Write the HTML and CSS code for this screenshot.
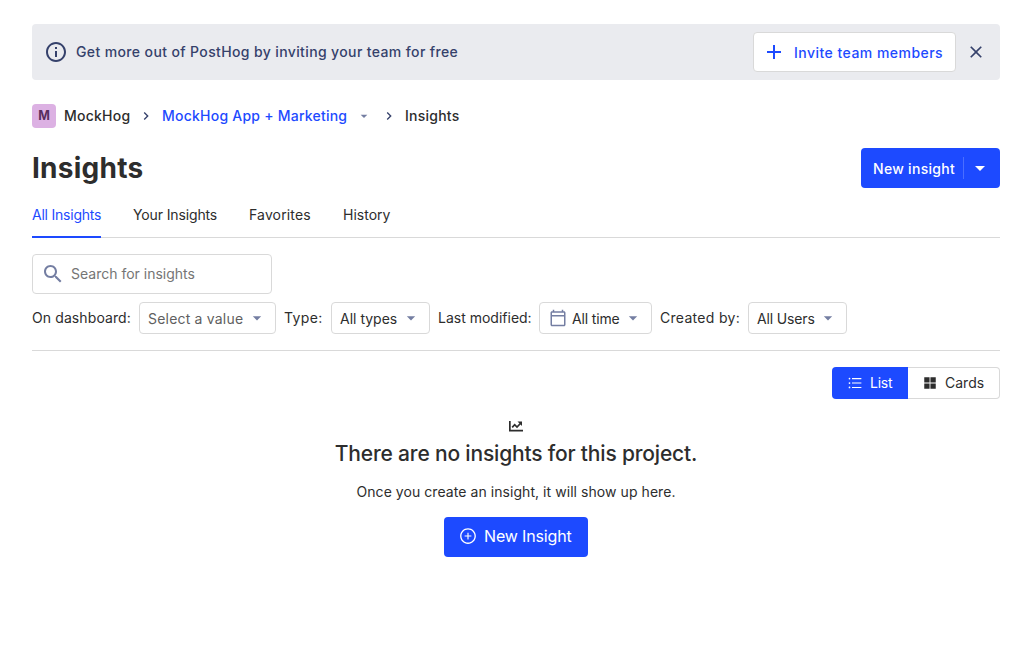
FILE: index.html
```html
<!DOCTYPE html>
<html lang="en">
<head>
<meta charset="utf-8">
<title>Insights</title>
<link rel="stylesheet" href="styles.css">
</head>
<body>
<svg width="0" height="0" class="sprite">
  <symbol id="caret" viewBox="0 0 24 24"><path d="M7 10l5 5 5-5z"/></symbol>
  <symbol id="chevron" viewBox="0 0 24 24"><path d="M10 6L8.59 7.41 13.17 12l-4.58 4.59L10 18l6-6z"/></symbol>
</svg>
<main class="page">
  <div class="banner">
    <svg class="icon-24" viewBox="0 0 24 24"><path d="M11 7h2v2h-2zm0 4h2v6h-2zm1-9C6.48 2 2 6.48 2 12s4.48 10 10 10 10-4.48 10-10S17.52 2 12 2zm0 18c-4.41 0-8-3.59-8-8s3.59-8 8-8 8 3.59 8 8-3.590 8-8 8z"/></svg>
    <div class="banner-text">Get more out of PostHog by inviting your team for free</div>
    <button class="btn invite"><svg class="icon-24" viewBox="0 0 24 24"><path d="M19 13h-6v6h-2v-6H5v-2h6V5h2v6h6z"/></svg><span>Invite team members</span></button>
    <button class="close" aria-label="Close"><svg class="icon-20" viewBox="0 0 24 24"><path d="M19 6.41L17.59 5 12 10.590 6.410 5 5 6.410 10.590 12 5 17.590 6.410 19 12 13.410 17.590 19 19 17.590 13.410 12z"/></svg></button>
  </div>

  <nav class="breadcrumbs">
    <span class="lettermark">M</span>
    <span class="crumb crumb-org">MockHog</span>
    <svg class="chevron"><use href="#chevron"/></svg>
    <a class="crumb crumb-project">MockHog App + Marketing</a>
    <svg class="crumb-caret"><use href="#caret"/></svg>
    <svg class="chevron chevron-last"><use href="#chevron"/></svg>
    <span class="crumb">Insights</span>
  </nav>

  <header class="title-row">
    <h1>Insights</h1>
    <button class="btn new-split"><span class="new-label">New insight</span><span class="new-side"><svg class="icon-24"><use href="#caret"/></svg></span></button>
  </header>

  <div class="tabs">
    <div class="tab active">All Insights</div>
    <div class="tab yours">Your Insights</div>
    <div class="tab favorites">Favorites</div>
    <div class="tab">History</div>
  </div>

  <div class="search">
    <svg class="icon-24" viewBox="0 0 24 24"><path d="M15.500 14h-.79l-.28-.27C15.410 12.590 16 11.110 16 9.500 16 5.910 13.090 3 9.500 3S3 5.910 3 9.500 5.910 16 9.500 16c1.610 0 3.090-.59 4.230-1.570l.27.28v.79l5 4.990L20.490 19l-4.990-5zm-6 0C7.010 14 5 11.990 5 9.500S7.010 5 9.500 5 14 7.010 14 9.500 11.990 14 9.500 14z"/></svg>
    <input class="search-input" placeholder="Search for insights">
  </div>

  <div class="filters">
    <span class="filter-label w-dashboard">On dashboard:</span>
    <button class="select s-dashboard muted"><span>Select a value</span><svg><use href="#caret"/></svg></button>
    <span class="filter-label w-type">Type:</span>
    <button class="select s-type"><span>All types</span><svg><use href="#caret"/></svg></button>
    <span class="filter-label w-modified">Last modified:</span>
    <button class="select s-modified"><svg class="calendar" viewBox="0 0 24 24"><path d="M20 3h-1V1h-2v2H7V1H5v2H4c-1.100 0-2 .9-2 2v16c0 1.100.9 2 2 2h16c1.100 0 2-.9 2-2V5c0-1.100-.9-2-2-2zm0 18H4V10h16zm0-13H4V5h16z"/></svg><span>All time</span><svg><use href="#caret"/></svg></button>
    <span class="filter-label w-created">Created by:</span>
    <button class="select s-created"><span>All Users</span><svg><use href="#caret"/></svg></button>
  </div>

  <div class="view-row">
    <div class="view list"><svg viewBox="0 0 1024 1024"><path d="M912 192H328c-4.400 0-8 3.600-8 8v56c0 4.400 3.600 8 8 8h584c4.400 0 8-3.600 8-8v-56c0-4.400-3.600-8-8-8zm0 284H328c-4.400 0-8 3.600-8 8v56c0 4.400 3.600 8 8 8h584c4.400 0 8-3.600 8-8v-56c0-4.400-3.600-8-8-8zm0 284H328c-4.400 0-8 3.600-8 8v56c0 4.400 3.600 8 8 8h584c4.400 0 8-3.600 8-8v-56c0-4.400-3.600-8-8-8zM104 228a56 56 0 10112 0 56 56 0 10-112 0zm0 284a56 56 0 10112 0 56 56 0 10-112 0zm0 284a56 56 0 10112 0 56 56 0 10-112 0z"/></svg><span>List</span></div>
    <div class="view cards"><svg viewBox="0 0 1024 1024"><path d="M144 144h340v340H144zM540 144h340v340H540zM144 540h340v340H144zM540 540h340v340H540z"/></svg><span>Cards</span></div>
  </div>

  <section class="empty">
    <svg class="chart" viewBox="0 0 14 12"><path d="M0 1h1.700v8.700H14v1.700H0z"/><path d="M3.200 7.300 5.700 4.700 8 7 11.400 3.500" fill="none" stroke="currentColor" stroke-width="1.700"/><path d="M8.500 1.600H13v4.500z"/></svg>
    <h2>There are no insights for this project.</h2>
    <p>Once you create an insight, it will show up here.</p>
    <button class="btn create"><svg viewBox="0 0 1024 1024"><path d="M696 480H544V328c0-4.400-3.600-8-8-8h-48c-4.400 0-8 3.600-8 8v152H328c-4.400 0-8 3.600-8 8v48c0 4.400 3.600 8 8 8h152v152c0 4.400 3.600 8 8 8h48c4.400 0 8-3.600 8-8V544h152c4.400 0 8-3.600 8-8v-48c0-4.400-3.600-8-8-8z"/><path d="M512 64C264.600 64 64 264.600 64 512s200.600 448 448 448 448-200.600 448-448S759.400 64 512 64zm0 820c-205.400 0-372-166.600-372-372s166.600-372 372-372 372 166.600 372 372-166.600 372-372 372z"/></svg><span>New Insight</span></button>
  </section>
</main>
</body>
</html>
```
FILE: styles.css
```css
* { box-sizing: border-box; }
body {
  margin: 0;
  background: #fff;
  color: #2d2d2d;
  font: 400 14px/22px Inter, "Noto Sans", sans-serif;
}
svg { display: block; flex: none; fill: currentColor; }
.sprite { position: absolute; }
button { font: inherit; color: inherit; padding: 0; border: 0; background: none; }
.page { padding: 24px 32px; }
.icon-24 { width: 24px; height: 24px; }
.icon-20 { width: 20px; height: 20px; }
.btn { display: flex; align-items: center; height: 40px; border-radius: 4px; white-space: nowrap; }

.banner {
  display: flex;
  align-items: center;
  height: 56px;
  padding: 0 14px 0 12px;
  border-radius: 4px;
  background: #eaebef;
  color: #35416b;
}
.banner-text { flex: 1; margin-left: 8px; font-weight: 500; letter-spacing: 0.375px; }
.invite {
  width: 203px;
  padding: 1px 0 0 8px;
  border: 1px solid #d9d9d9;
  background: #fff;
  color: #1d4aff;
  font-weight: 500;
  letter-spacing: 0.47px;
}
.invite svg { margin-top: -1px; }
.invite span { margin-left: 8px; }
.close { margin-left: 10px; }

.breadcrumbs { display: flex; align-items: center; height: 24px; margin-top: 24px; font-weight: 500; }
.lettermark {
  width: 24px;
  height: 24px;
  border-radius: 4px;
  background: #dcb1e3;
  color: #572e5e;
  font: 700 12.500px/24px Inter, sans-serif;
  text-align: center;
}
.crumb { white-space: nowrap; letter-spacing: 0.23px; }
.crumb-org { width: 66px; margin-left: 8px; }
.crumb-project { width: 186px; color: #1d4aff; }
.chevron { width: 16px; height: 16px; margin: 0 8px; color: #35416b; }
.crumb-caret { width: 16px; height: 16px; margin-left: 8px; color: #747ea2; }
.chevron-last { margin-left: 9px; }

.title-row { display: flex; justify-content: space-between; height: 40px; margin-top: 20px; }
h1 { margin: 0; font-size: 28px; line-height: 40px; font-weight: 700; letter-spacing: 0.25px; }
.new-split { width: 139px; padding-left: 12px; background: #1d4aff; color: #fff; font-weight: 500; letter-spacing: 0.3px; }
.new-label { width: 90px; padding-top: 2px; text-align: left; }
.new-side { height: 22px; padding-left: 4px; border-left: 1px solid #4a6eff; }
.new-side svg { margin-top: -1px; }

.tabs { display: flex; gap: 32px; height: 50px; border-bottom: 1px solid #d9d9d9; }
.tab { height: 50px; padding-top: 16px; white-space: nowrap; }
.active { width: 69px; letter-spacing: -0.22px; color: #1d4aff; border-bottom: 2px solid #1d4aff; }
.yours { width: 84px; letter-spacing: -0.13px; }
.favorites { width: 62px; letter-spacing: 0.15px; }

.search {
  display: flex;
  align-items: center;
  width: 240px;
  height: 40px;
  margin-top: 16px;
  padding-left: 8px;
  border: 1px solid #d9d9d9;
  border-radius: 4px;
  color: #747ea2;
}
.search-input { width: 190px; margin-left: 6px; padding: 0; border: 0; outline: 0; font: inherit; background: none; }
.search-input::placeholder { color: #757575; }

.filters { display: flex; gap: 8px; height: 57px; padding-top: 8px; border-bottom: 1px solid #d9d9d9; }
.filter-label { line-height: 32px; white-space: nowrap; }
.w-dashboard { width: 99px; letter-spacing: 0.1px; }
.w-type { width: 39px; letter-spacing: 0.35px; }
.w-modified { width: 93px; }
.w-created { width: 80px; letter-spacing: 0.3px; }
.select {
  display: flex;
  align-items: center;
  height: 32px;
  padding: 0 8px;
  border: 1px solid #d9d9d9;
  border-radius: 4px;
  white-space: nowrap;
}
.select span { flex: 1; padding-top: 2px; text-align: left; }
.select svg { width: 20px; height: 20px; color: #747ea2; }
.select .calendar { width: 18px; height: 18px; margin: -1px 5px 0 1px; }
.s-dashboard { width: 137px; letter-spacing: 0.2px; }
.s-type { width: 99px; }
.s-modified { width: 113px; letter-spacing: -0.15px; }
.s-created { width: 99px; letter-spacing: -0.15px; }
.muted { color: #5f5f5f; }

.view-row { display: flex; justify-content: flex-end; margin-top: 16px; }
.view { display: flex; align-items: center; height: 32px; gap: 7px; padding-left: 15px; }
.view svg { width: 16px; height: 16px; }
.list { width: 76px; border-radius: 4px 0 0 4px; background: #1d4aff; color: #fff; letter-spacing: -0.25px; }
.cards { width: 92px; padding-left: 14px; border: 1px solid #d9d9d9; border-left: 0; border-radius: 0 4px 4px 0; }

.empty { display: flex; flex-direction: column; align-items: center; }
.chart { width: 14px; height: 12px; margin-top: 21px; }
h2 { margin: 5px 0 0; font-size: 21px; line-height: 33px; font-weight: 500; letter-spacing: -0.18px; white-space: nowrap; }
p { margin: 11px 0 0; letter-spacing: 0.06px; }
.create { width: 144px; margin-top: 14px; padding: 0 0 2px 15px; background: #1d4aff; color: #fff; font-size: 16px; letter-spacing: -0.15px; }
.create svg { width: 18px; height: 18px; margin-right: 7px; }
```
